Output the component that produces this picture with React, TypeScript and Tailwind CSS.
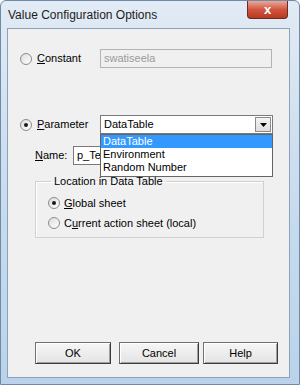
function Radio({ checked }: { checked?: boolean }) {
  return (
    <span className="flex h-[12px] w-[12px] shrink-0 items-center justify-center rounded-full border border-[#8c8c8c] bg-[linear-gradient(135deg,#dcdcdc,#ffffff)]">
      {checked && <span className="h-[4px] w-[4px] rounded-full bg-[#1a1a1a]" />}
    </span>
  )
}

function Btn({ label, w }: { label: string; w: string }) {
  return (
    <div
      className={`flex h-[22px] items-center justify-center border border-[#707070] border-b-[#3c3c3c] border-r-[#3c3c3c] bg-[linear-gradient(#f6f6f6,#e4e4e4)] shadow-[inset_1px_1px_0_#ffffff,inset_-1px_-1px_0_#a0a0a0] ${w}`}
    >
      {label}
    </div>
  )
}

export default function App() {
  return (
    <div className="flex h-[385px] w-[300px] flex-col rounded-t-[6px] border border-[#6d8aa8] bg-[linear-gradient(180deg,#e2ebf5,#cddeef_40%,#bad3ea)] font-['Liberation_Sans',Arial,sans-serif] text-[11px] text-black">
      {/* title bar */}
      <div className="flex h-[27px] shrink-0 items-start justify-between pl-[7px] pr-[11px]">
        <span className="mt-[7px] text-[12px] leading-[14px] text-[#1c1c1c]">Value Configuration Options</span>
        <div className="flex h-[18px] w-[41px] items-center justify-center rounded-b-[4px] border border-t-0 border-[#6b2a22] bg-[linear-gradient(#e9a99b,#d2553f_50%,#b83a22)] text-[13px] font-bold leading-none text-white">
          x
        </div>
      </div>

      {/* client area */}
      <div className="relative mx-[6px] mb-[6px] mr-[9px] flex-1 border border-[#8ba2ba] bg-[#f0f0f0]">
        {/* constant row */}
        <div className="mt-[20px] flex h-[19px] items-center">
          <div className="ml-[12px] flex w-[80px] items-center gap-[5px]">
            <Radio />
            <span>
              <span className="underline">C</span>onstant
            </span>
          </div>
          <div className="flex h-[19px] w-[172px] items-center border border-[#b4b4b4] bg-[#f0f0f0] px-[3px] text-[#9a9a9a]">
            swatiseela
          </div>
        </div>

        {/* parameter row */}
        <div className="mt-[47px] flex h-[19px] items-center">
          <div className="ml-[12px] flex w-[80px] items-center gap-[5px]">
            <Radio checked />
            <span>
              <span className="underline">P</span>arameter
            </span>
          </div>
          <div className="flex h-[19px] w-[173px] items-center justify-between border border-[#7a7a7a] bg-white pl-[3px]">
            <span>DataTable</span>
            <div className="mr-[1px] flex h-[15px] w-[16px] items-center justify-center border border-[#8a8a8a] bg-[linear-gradient(#f4f4f4,#dedede)]">
              <svg width="7" height="4" viewBox="0 0 7 4">
                <path d="M0 0H7L3.5 4Z" fill="#000" />
              </svg>
            </div>
          </div>
        </div>

        {/* name row */}
        <div className="mt-[12px] flex h-[19px] items-center">
          <span className="ml-[27px] w-[38px]">
            <span className="underline">N</span>ame:
          </span>
          <div className="flex h-[19px] w-[120px] items-center border border-[#7a7a7a] bg-white px-[3px]">
            <span className="w-[23px] overflow-hidden whitespace-nowrap">p_Te</span>
          </div>
        </div>

        {/* group box */}
        <fieldset className="ml-[27px] mt-[10px] h-[63px] w-[229px] border border-[#d0d0d0] pl-[12px] shadow-[inset_1px_1px_0_#ffffff]">
          <legend className="ml-[3px] px-[3px] leading-[13px]">Location in Data Table</legend>
          <div className="mt-[7px] flex items-center gap-[4px]">
            <Radio checked />
            <span>
              <span className="underline">G</span>lobal sheet
            </span>
          </div>
          <div className="mt-[3px] flex items-center gap-[4px]">
            <Radio />
            <span>
              C<span className="underline">u</span>rrent action sheet (local)
            </span>
          </div>
        </fieldset>

        {/* buttons */}
        <div className="absolute bottom-[13px] left-[27px] flex gap-[4px]">
          <Btn label="OK" w="w-[76px] mr-[4px]" />
          <Btn label="Cancel" w="w-[80px]" />
          <Btn label="Help" w="w-[75px]" />
        </div>

        {/* open dropdown list */}
        <div className="absolute left-[92px] top-[105px] w-[173px] border border-[#646464] bg-white leading-[13px]">
          <div className="bg-[#3399ff] px-[2px] text-white">DataTable</div>
          <div className="px-[2px]">Environment</div>
          <div className="px-[2px] pb-[2px]">Random Number</div>
        </div>
      </div>
    </div>
  )
}
